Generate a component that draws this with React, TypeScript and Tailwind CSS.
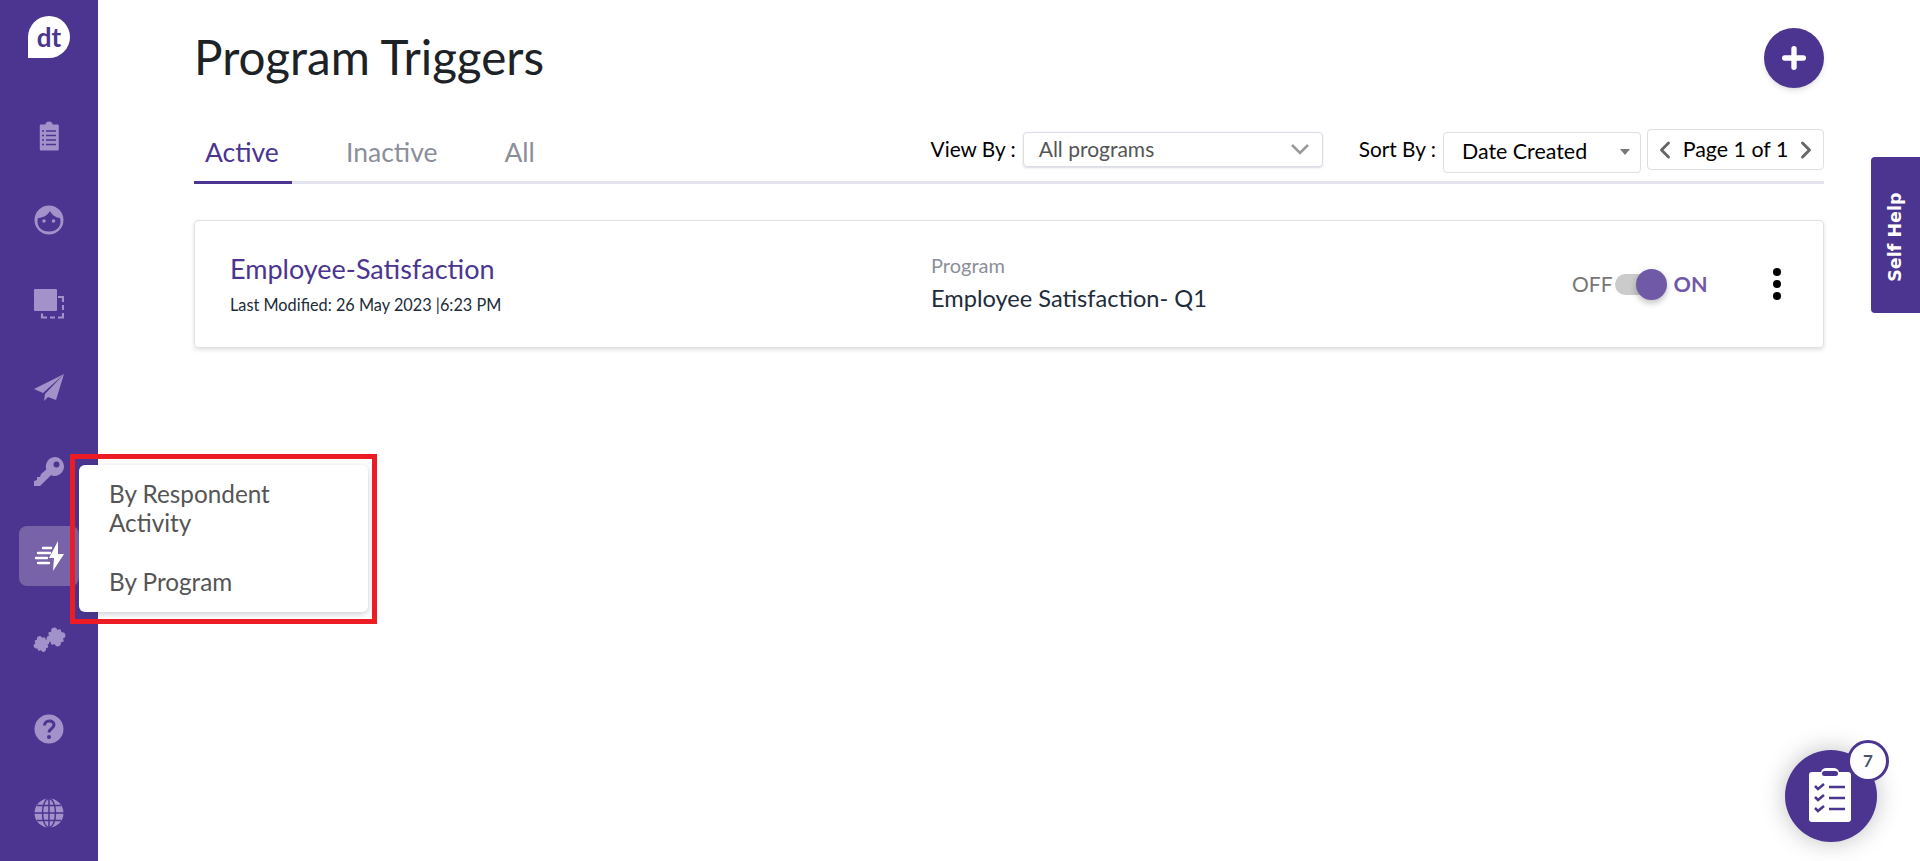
import React from "react";
import { ChevronLeft, ChevronRight, Plus } from "lucide-react";

const iconColor = "#a192c9";

function ClipboardIcon() {
  return (
    <svg width="30" height="30" viewBox="0 0 30 30">
      <path fill={iconColor} d="M6.500 3.500h4.800a3.800 3.800 0 0 1 7.400 0h4.800c.8 0 1.300.5 1.300 1.300v23.400c0 .8-.5 1.300-1.300 1.300h-16.400c-.8 0-1.300-.5-1.300-1.300V4.800c0-.8.5-1.300 1.300-1.300z" />
      <path stroke="#4b3590" strokeWidth="1.600" d="M8 10h2M12 10h10M8 14.500h2M12 14.500h10M8 19h2M12 19h10M8 23.500h2M12 23.500h10" />
    </svg>
  );
}

function FaceIcon() {
  return (
    <svg width="30" height="30" viewBox="0 0 30 30">
      <circle cx="15" cy="15" r="14.500" fill={iconColor} />
      <path fill="#4b3590" d="M4 13C8 13 13 11 16 6C18 10 22 13 26 13C28 20 24 26.500 15 26.500C6 26.500 2 20 4 13z" />
      <circle cx="10" cy="16" r="1.800" fill={iconColor} />
      <circle cx="19.500" cy="16" r="1.800" fill={iconColor} />
    </svg>
  );
}

function CopyIcon() {
  return (
    <svg width="30" height="30" viewBox="0 0 30 30">
      <rect x="0" y="0" width="23" height="22" rx="1" fill={iconColor} />
      <path fill="none" stroke={iconColor} strokeWidth="2.200" d="M24 8h5v5M29 16v5M29 24v4.500h-5M21 28.500h-5M13 28.500H8v-4" />
    </svg>
  );
}

function PlaneIcon() {
  return (
    <svg width="30" height="30" viewBox="0 0 30 30">
      <path fill={iconColor} d="M30 1 0 16l9 4zM30 1 11 21l-1 7 4-4 8 3z" />
    </svg>
  );
}

function KeyIcon() {
  return (
    <svg width="30" height="30" viewBox="0 0 30 30">
      <path fill={iconColor} fillRule="evenodd" d="M20.500 0a9.500 9.500 0 1 1-3.600 18.300L6 29H0v-5l3-1v-3h3l1-3 5.300-4.600A9.500 9.500 0 0 1 20.500 0zm2 4.500a3 3 0 1 0 0 6 3 3 0 0 0 0-6z" />
    </svg>
  );
}

function BoltIcon() {
  return (
    <svg width="30" height="30" viewBox="0 0 30 30">
      <path fill="#fff" d="M24 0 15 17h5l-1 13L30 13h-6z" />
      <path stroke="#fff" strokeWidth="2.400" strokeLinecap="round" d="M9 7h8M4 12h12M2 17h11M4 22h11" />
    </svg>
  );
}

function PuzzlePiece({ cx, cy, size, angle }: { cx: number; cy: number; size: number; angle: number }) {
  const half = size / 2;
  return (
    <g transform={`rotate(${angle} ${cx} ${cy})`} fill={iconColor}>
      <rect x={cx - half} y={cy - half} width={size} height={size} rx="1" />
      <circle cx={cx} cy={cy - half} r={size * 0.24} />
      <circle cx={cx + half} cy={cy} r={size * 0.24} />
      <circle cx={cx} cy={cy + half} r={size * 0.24} />
      <circle cx={cx - half} cy={cy} r={size * 0.24} />
    </g>
  );
}

function PuzzleIcon() {
  return (
    <svg width="34" height="28" viewBox="0 0 34 28">
      <PuzzlePiece cx={9.500} cy={18} size={11} angle={-20} />
      <PuzzlePiece cx={24} cy={11} size={13} angle={-15} />
    </svg>
  );
}

function HelpIcon() {
  return (
    <svg width="30" height="30" viewBox="0 0 30 30">
      <circle cx="15" cy="15" r="14.500" fill={iconColor} />
      <path fill="none" stroke="#4b3590" strokeWidth="3" d="M10.500 11.500c0-6 9.500-6 9.500-.5 0 3.500-5 3.500-5 7.500" />
      <circle cx="15" cy="23" r="2" fill="#4b3590" />
    </svg>
  );
}

function GlobeIcon() {
  return (
    <svg width="30" height="30" viewBox="0 0 30 30">
      <circle cx="15" cy="15" r="14.500" fill={iconColor} />
      <g fill="none" stroke="#4b3590" strokeWidth="1.500">
        <ellipse cx="15" cy="15" rx="6.500" ry="14.500" />
        <path d="M15 0v30M0 15h30M3 7.500h24M3 22.500h24" />
      </g>
    </svg>
  );
}

const navItems = [
  { key: "surveys", icon: <ClipboardIcon /> },
  { key: "respondents", icon: <FaceIcon /> },
  { key: "templates", icon: <CopyIcon /> },
  { key: "send", icon: <PlaneIcon /> },
  { key: "access", icon: <KeyIcon /> },
  { key: "triggers", icon: <BoltIcon />, active: true },
  { key: "integrations", icon: <PuzzleIcon /> },
];

const bottomItems = [
  { key: "help", icon: <HelpIcon /> },
  { key: "language", icon: <GlobeIcon /> },
];

export default function App() {
  return (
    <div className="relative flex h-[861px] overflow-hidden bg-white font-['Lato','Open_Sans',sans-serif] text-[#212529]">
      {/* Sidebar */}
      <aside className="flex w-[98px] shrink-0 flex-col items-center bg-[#4b3590] pt-4">
        <div className="flex h-[42px] w-[42px] items-center justify-center rounded-full rounded-bl-none bg-white text-[26px] font-bold leading-none text-[#4b3590]">
          dt
        </div>
        <nav className="mt-[48px] flex flex-col items-center gap-6">
          {navItems.map((item) => (
            <div
              key={item.key}
              className={`flex h-[60px] w-[60px] items-center justify-center rounded-lg ${item.active ? "bg-[#7863a9]" : ""}`}
            >
              {item.icon}
            </div>
          ))}
        </nav>
        <div className="mt-[29px] flex flex-col items-center gap-6">
          {bottomItems.map((item) => (
            <div key={item.key} className="flex h-[60px] w-[60px] items-center justify-center">
              {item.icon}
            </div>
          ))}
        </div>
      </aside>

      {/* Main */}
      <main className="flex-1 px-[96px]">
        <div className="flex h-[129px] items-start justify-between">
          <h1 className="mt-[27px] text-[47.600px] font-normal leading-[60px] text-[#1d2226]">Program Triggers</h1>
          <button className="mt-[28px] flex h-[60px] w-[60px] items-center justify-center rounded-full bg-[#4b3590] text-white shadow-md">
            <Plus size={32} strokeWidth={4} />
          </button>
        </div>

        <div className="flex h-[55px] items-start justify-between border-b-[3px] border-[#e3e4ee]">
          <div className="flex text-[26.500px] leading-[46px]">
            <div className="-mb-[3px] h-[55px] w-[98px] border-b-[3px] border-[#4b3590] pl-[11px] text-[#4b3590]">Active</div>
            <div className="ml-[54px] text-[#8b8f9a]">Inactive</div>
            <div className="ml-[67px] text-[#8b8f9a]">All</div>
          </div>
          <div className="flex items-start">
            <span className="mt-[7px] mr-[7px] text-[20.800px] leading-[26px] text-black">View By :</span>
            <div className="mt-[3px] flex h-[35px] w-[300px] items-center justify-between rounded border border-[#dcdce6] pb-[2px] pl-[15px] pr-[12px] text-[21px] text-[#555] shadow-[0_1px_2px_rgba(60,60,120,0.2)]">
              All programs
              <svg width="20" height="12" viewBox="0 0 20 12"><path d="M2 2l8 8 8-8" fill="none" stroke="#999" strokeWidth="2.500" /></svg>
            </div>
            <span className="mt-[7px] ml-[36px] mr-[7px] text-[20.800px] leading-[26px] text-black">Sort By :</span>
            <div className="mt-[3px] flex h-[41px] w-[198px] items-center justify-between rounded border border-[#dedee4] pb-[2px] pl-[18px] pr-[10px] text-[21.400px] text-black">
              Date Created
              <span className="h-0 w-0 border-x-[5.500px] border-t-[6px] border-x-transparent border-t-[#777]"></span>
            </div>
            <div className="ml-[6px] flex h-[41px] w-[177px] items-center justify-between rounded border border-[#dedee4] px-[3px] text-[21.400px] text-black">
              <ChevronLeft size={28} strokeWidth={2.500} className="text-[#666]" />
              <span>Page 1 of 1</span>
              <ChevronRight size={28} strokeWidth={2.500} className="text-[#666]" />
            </div>
          </div>
        </div>

        {/* Trigger card */}
        <div className="mt-9 flex h-[128px] items-center rounded border border-[#e0e0e4] shadow-[0_2px_4px_rgba(0,0,0,0.12)]">
          <div className="w-[736px] shrink-0 pl-[35px]">
            <div className="text-[27px] leading-8 text-[#4b3590]">Employee-Satisfaction</div>
            <div className="mt-[10px] text-[16.300px] leading-5 text-[#212c3a]">Last Modified: 26 May 2023 |6:23 PM</div>
          </div>
          <div className="w-[641px] shrink-0 pb-1">
            <div className="text-[20px] leading-6 text-[#8b8f9a]">Program</div>
            <div className="mt-[7px] text-[23.600px] leading-7 text-[#212c3a]">Employee Satisfaction- Q1</div>
          </div>
          <div className="flex items-center">
            <span className="text-[21px] text-[#777]">OFF</span>
            <div className="relative ml-[2px] h-[21px] w-[51px] rounded-full bg-[#cbcbcb]">
              <div className="absolute -top-[5px] -right-[1px] h-[31px] w-[31px] rounded-full bg-[#705aa8] shadow-[0_3px_6px_rgba(0,0,0,0.25)]"></div>
            </div>
            <span className="ml-[8px] text-[21.500px] font-bold text-[#705aa8]">ON</span>
          </div>
          <div className="ml-[65px] flex flex-col gap-1">
            <span className="h-2 w-2 rounded-full bg-black"></span>
            <span className="h-2 w-2 rounded-full bg-black"></span>
            <span className="h-2 w-2 rounded-full bg-black"></span>
          </div>
        </div>
      </main>

      {/* Flyout menu with the red highlight over it */}
      <div className="absolute top-[465px] left-[79px] h-[147px] w-[289px] rounded-md bg-white pt-[14px] pl-[30px] text-[24.300px] leading-[29px] text-[#555] shadow-[0_2px_6px_rgba(50,50,93,0.25)]">
        <div className="w-[200px]">By Respondent Activity</div>
        <div className="mt-[30px]">By Program</div>
      </div>
      <div className="absolute top-[454px] left-[70px] h-[170px] w-[307px] border-[5px] border-[#ed1c24]"></div>

      {/* Self help tab */}
      <div className="absolute top-[157px] right-0 flex h-[156px] w-[49px] items-center justify-center rounded-l bg-[#4b3590]">
        <span className="mt-[4px] -rotate-90 whitespace-nowrap font-['DejaVu_Sans',sans-serif] text-[17.500px] font-bold text-white">Self Help</span>
      </div>

      {/* Floating checklist button */}
      <div className="absolute top-[750px] left-[1785px] flex h-[92px] w-[92px] items-center justify-center rounded-full bg-[#4b3590] shadow-[0_0_24px_rgba(0,0,0,0.25)]">
        <svg width="42" height="54" viewBox="0 0 42 54" className="-mt-[3px] -ml-[2px]">
          <path fill="#fff" d="M3 4h9c1-3 3-4 5-4h8c2 0 4 1 5 4h9c2 0 3 1 3 3v44c0 2-1 3-3 3H3c-2 0-3-1-3-3V7c0-2 1-3 3-3z" />
          <rect x="13" y="3" width="16" height="5" rx="2.500" fill="#4b3590" />
          <path fill="none" stroke="#4b3590" strokeWidth="2.500" d="M6 18l3 3 6-5M6 29l3 3 6-5M6 40l3 3 6-5M20 19h16M20 30h16M20 41h16" />
        </svg>
        <div className="absolute -top-[10px] -right-[12px] flex h-[42px] w-[42px] items-center justify-center rounded-full border-[3px] border-[#4b3590] bg-white text-[17px] font-bold text-[#4a5568]">
          7
        </div>
      </div>
    </div>
  );
}
